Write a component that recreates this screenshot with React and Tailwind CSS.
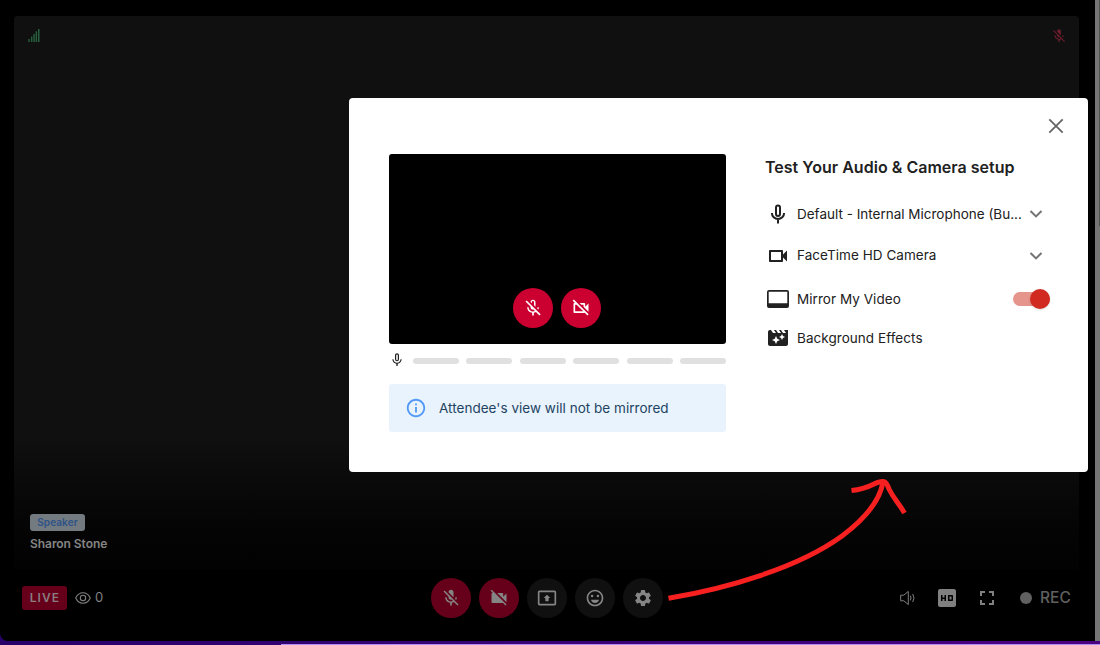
import React from "react";
import {
  MdMicNone, MdOutlineVideocam, MdOutlineVideocamOff, MdOutlineMicOff, MdMicOff, MdVideocamOff,
  MdOutlinePresentToAll, MdOutlineEmojiEmotions, MdSettings, MdHd, MdFullscreen, MdMovieFilter, MdInfoOutline,
} from "react-icons/md";

const Chevron = () => (
  <svg width="14" height="10" viewBox="0 0 14 10" fill="none" stroke="#757575" strokeWidth="2.1" className="shrink-0">
    <path d="M1.5 2l5.5 5.4L12.5 2" />
  </svg>
);

const Round = ({ className, children }) => (
  <button className={"flex size-10 items-center justify-center rounded-full " + className}>{children}</button>
);

function Stage() {
  return (
    <main className="ml-[14px] mt-4 flex h-[554px] w-[1065px] flex-col justify-between rounded bg-linear-to-b from-[#101010] from-[76%] to-[#020202] px-[14px] pb-[19px] pt-[13px]">
      <div className="flex justify-between">
        <svg width="13" height="13" viewBox="0 0 13 13" fill="#265f3e">
          <rect x="0.3" y="10" width="1.5" height="3" />
          <rect x="3" y="7.5" width="1.4" height="5.500" />
          <rect x="5.3" y="5" width="1.5" height="8" />
          <rect x="7.6" y="2.3" width="1.5" height="10.7" />
          <rect x="10" y="0" width="1.5" height="13" />
        </svg>
        <MdMicOff size={16} color="#6a1d2d" className="-mr-[2px] -mt-px" />
      </div>
      <div className="ml-[2px] flex flex-col items-start">
        <span className="flex h-[17px] w-[55px] items-center justify-center rounded-[3px] bg-[#737a80] text-[10px] font-semibold tracking-[0.1px] text-[#2e5387]">Speaker</span>
        <span className="mt-[5px] h-[15px] whitespace-nowrap text-[12px] font-semibold leading-[15px] tracking-[-0.05px] text-[#858585]">Sharon Stone</span>
      </div>
    </main>
  );
}

function Toolbar() {
  return (
    <footer className="grid h-[55px] grid-cols-[409px_1fr_177px] items-center pl-[22px] pr-[16px]">
      <div className="flex items-center">
        <span className="flex h-6 w-[45px] items-center justify-center rounded-[3px] bg-[#66001a] pl-px text-[12px] font-semibold tracking-[1.1px] text-[#8a7c80]">LIVE</span>
        <svg width="16" height="12" viewBox="0 0 16 12" fill="none" stroke="#808080" strokeWidth="1.1" className="ml-2">
          <path d="M.7 6C2.3 2.7 4.8.8 8 .8S13.700 2.700 15.300 6C13.700 9.300 11.200 11.200 8 11.200S2.300 9.300.7 6z" />
          <circle cx="8" cy="6" r="2.700" />
        </svg>
        <span className="ml-1 text-[13px] text-[#808080]">0</span>
      </div>
      <div className="flex gap-2 text-[#858585]">
        <Round className="bg-[#66001a]"><MdMicOff size={20} /></Round>
        <Round className="bg-[#66001a]"><MdVideocamOff size={20} /></Round>
        <Round className="bg-[#101010]"><MdOutlinePresentToAll size={20} /></Round>
        <Round className="bg-[#101010]"><MdOutlineEmojiEmotions size={20} /></Round>
        <Round className="bg-[#101010]"><MdSettings size={20} /></Round>
      </div>
      <div className="flex items-center text-[#808080]">
        <svg width="16" height="16" viewBox="0 0 16 16" fill="none" stroke="currentColor" className="ml-[-2px]">
          <path d="M.7 5.200h3.100L8.300 1.400v13.200L3.800 10.800H.7z" />
          <path d="M10.300 5.600q1.500 2.400 0 4.800M12.700 4q2.700 4 0 8" />
        </svg>
        <MdHd size={24} className="ml-[19px]" />
        <MdFullscreen size={24} className="ml-4" />
        <i className="ml-[21px] size-3 rounded-full bg-[#606060]" />
        <span className="ml-2 text-[15.5px] font-medium text-[#606060]">REC</span>
      </div>
    </footer>
  );
}

function Preview() {
  return (
    <section className="w-[337px]">
      <div className="flex h-[190px] items-end justify-center gap-2 rounded-[3px] bg-black pb-4 pr-px text-white">
        <Round className="bg-[#cc0030]"><MdOutlineMicOff size={20} /></Round>
        <Round className="bg-[#cc0030]"><MdOutlineVideocamOff size={20} /></Round>
      </div>
      <div className="flex h-8 items-center">
        <MdMicNone size={16} color="#212121" />
        <div className="ml-2 flex flex-1 justify-between pt-px">
          {[0, 1, 2, 3, 4, 5].map((i) => <i key={i} className="h-[6px] w-[46px] rounded-full bg-[#e0e0e0]" />)}
        </div>
      </div>
      <div className="mt-2 flex h-12 items-center rounded-[3px] bg-[#e8f3fd] pl-4 text-[#234361]">
        <MdInfoOutline size={22} color="#5299f5" />
        <span className="ml-3 whitespace-nowrap text-[13.5px] tracking-[0.03px]">Attendee's view will not be mirrored</span>
      </div>
    </section>
  );
}

function Settings() {
  return (
    <section className="ml-10 flex w-[286px] flex-col text-[13.5px] text-[#212121]">
      <h2 className="-ml-px mt-[2px] h-[22px] whitespace-nowrap text-[16px] font-semibold leading-[22px] tracking-[0.02px]">Test Your Audio &amp; Camera setup</h2>
      <div className="mt-[15px] flex h-[42px] items-center">
        <svg width="24" height="24" viewBox="0 0 24 24" fill="none" stroke="currentColor" strokeWidth="2">
          <rect x="10" y="3.500" width="4" height="10.500" rx="2" />
          <path d="M5.900 11c0 3.400 2.800 6 6.100 6s6.100-2.600 6.100-6M12 17v4.500" />
        </svg>
        <span className="ml-[7px] w-[225px] whitespace-nowrap">Default - Internal Microphone (Bu...</span>
        <span className="ml-[7px]"><Chevron /></span>
      </div>
      <div className="flex h-[42px] items-center">
        <MdOutlineVideocam size={24} />
        <span className="ml-[7px] w-[225px] whitespace-nowrap pb-[2px] tracking-[0.05px]">FaceTime HD Camera</span>
        <span className="ml-[7px]"><Chevron /></span>
      </div>
      <div className="flex h-[44px] items-center">
        <svg width="24" height="20" viewBox="0 0 24 20" fill="currentColor" fillRule="evenodd">
          <path d="M3 1h18a2 2 0 0 1 2 2v14a2 2 0 0 1-2 2H3a2 2 0 0 1-2-2V3a2 2 0 0 1 2-2zm-.3 1.700v11.600h18.600V2.700z" />
        </svg>
        <span className="ml-[7px] whitespace-nowrap tracking-[0.05px]">Mirror My Video</span>
        <span className="ml-auto mr-[2px] flex h-[14px] w-[37px] items-center justify-end rounded-full bg-[#e6958c]">
          <i className="size-5 shrink-0 rounded-full bg-[#d12a20] shadow-sm" />
        </span>
      </div>
      <div className="flex h-[34px] items-center">
        <MdMovieFilter size={24} />
        <span className="ml-[7px] whitespace-nowrap tracking-[0.05px]">Background Effects</span>
      </div>
    </section>
  );
}

export default function App() {
  return (
    <div className="relative h-[645px] w-[1100px] overflow-hidden bg-linear-to-r from-[#28006a] to-[#4b0082] font-['Inter',sans-serif]">
      <div className="flex h-[641px]">
        <div className="flex w-[1095px] flex-col rounded-bl-lg bg-black">
          <Stage />
          <Toolbar />
        </div>
        <div className="flex-1 bg-[#757575]">
          <div className="ml-[4px] h-[226px] bg-[#505050]" />
        </div>
      </div>
      <div className="ml-[281px] mt-[3px] h-px bg-[#b28cf0]" />
      <div className="absolute left-[349px] top-[98px] flex h-[374px] w-[739px] rounded-[4px] bg-white pl-10 pt-14">
        <Preview />
        <Settings />
        <svg width="16" height="16" viewBox="0 0 16 16" stroke="#666" strokeWidth="1.8" className="absolute right-6 top-5">
          <path d="M1.300 1.300l13.400 13.400M14.700 1.300L1.300 14.700" />
        </svg>
      </div>
      <svg width="250" height="130" viewBox="660 474 250 130" fill="none" stroke="#f62020" strokeWidth="5" className="absolute left-[660px] top-[474px]">
        <path d="M668.500 598.300C728 588 798 568 842 536C866 518 880 500 883 482" />
        <path d="M851.500 490.600C862 489.500 867 487.500 873 484.500C884 479 886 481 889 489C894 499 898 502 904.500 513" />
      </svg>
    </div>
  );
}
